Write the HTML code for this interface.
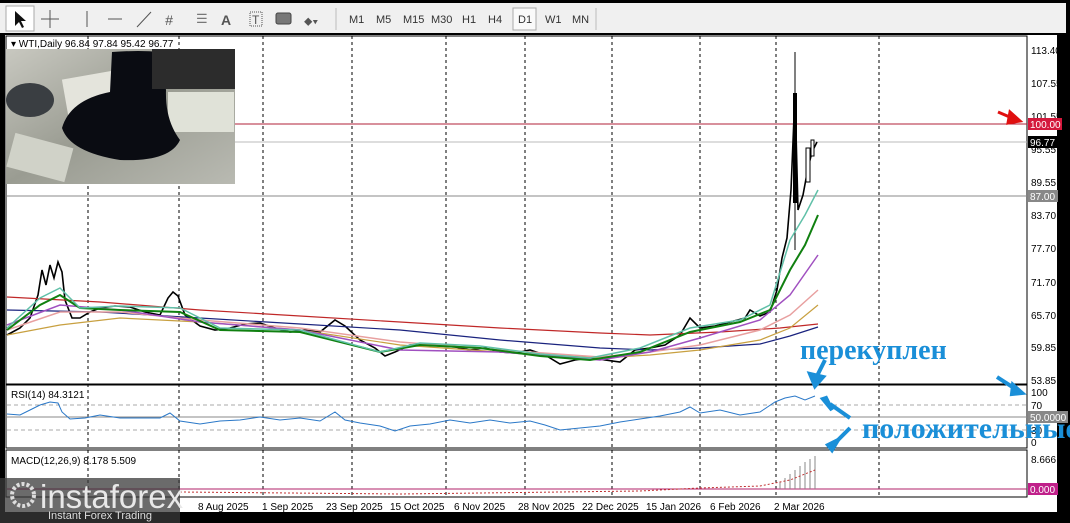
<!DOCTYPE html>
<html><head><meta charset="utf-8"><style>
body{margin:0;width:1070px;height:523px;overflow:hidden;background:#000;font-family:"Liberation Sans",sans-serif;}
svg{position:absolute;left:0;top:0}
.tb{font:11px "Liberation Sans",sans-serif;fill:#333}
.ax{font:10px "Liberation Sans",sans-serif;fill:#000}
</style></head><body>
<svg width="1070" height="523" viewBox="0 0 1070 523">
<rect x="0" y="3" width="1066" height="30" fill="#f0f0f0"/>
<rect x="6" y="6" width="28" height="25" fill="#fff" stroke="#aaa"/>
<path d="M15 11 L15 26 L19 22 L22 28 L24 27 L21 21 L26 21 Z" fill="#111"/>
<path d="M50 10 V28 M41 19 H59" stroke="#555"/>
<path d="M87 11 V27 M108 19 H122 M137 27 L151 12" stroke="#555"/>
<text x="165" y="25" font-size="14" fill="#555" font-style="italic">#</text>
<text x="196" y="23" font-size="13" fill="#777">☰</text>
<text x="221" y="25" font-size="14" font-weight="bold" fill="#555">A</text>
<rect x="250" y="12" width="12" height="14" fill="none" stroke="#555" stroke-dasharray="1,1"/><text x="252" y="24" font-size="12" fill="#555">T</text>
<rect x="276" y="13" width="15" height="11" rx="2" fill="#777" stroke="#444"/>
<text x="304" y="25" font-size="12" fill="#555">⬥▾</text>
<line x1="336" y1="8" x2="336" y2="30" stroke="#bbb"/>
<text x="349" y="23" class="tb">M1</text><text x="376" y="23" class="tb">M5</text><text x="403" y="23" class="tb">M15</text><text x="431" y="23" class="tb">M30</text><text x="462" y="23" class="tb">H1</text><text x="488" y="23" class="tb">H4</text>
<rect x="513" y="8" width="23" height="22" fill="#fafafa" stroke="#aaa"/>
<text x="518" y="23" class="tb">D1</text><text x="545" y="23" class="tb">W1</text><text x="572" y="23" class="tb">MN</text>
<line x1="596" y1="8" x2="596" y2="30" stroke="#bbb"/>
<rect x="5" y="35" width="1052" height="477" fill="#fff"/>
<rect x="6" y="36" width="1021" height="348" fill="none" stroke="#000"/>
<rect x="6" y="385" width="1021" height="63" fill="none" stroke="#000"/>
<rect x="6" y="450" width="1021" height="47" fill="none" stroke="#000"/>
<g stroke="#000" stroke-dasharray="3,3">
<line x1="88" y1="36" x2="88" y2="497"/><line x1="179" y1="36" x2="179" y2="497"/><line x1="263" y1="36" x2="263" y2="497"/><line x1="352" y1="36" x2="352" y2="497"/><line x1="446" y1="36" x2="446" y2="497"/><line x1="525" y1="36" x2="525" y2="497"/><line x1="612" y1="36" x2="612" y2="497"/><line x1="700" y1="36" x2="700" y2="497"/><line x1="776" y1="36" x2="776" y2="497"/><line x1="879" y1="36" x2="879" y2="497"/>
</g>
<line x1="7" y1="124" x2="1027" y2="124" stroke="#b0203a"/>
<line x1="7" y1="142" x2="1027" y2="142" stroke="#bbb"/>
<line x1="7" y1="196" x2="1027" y2="196" stroke="#888"/>
<defs><linearGradient id="g1" x1="0" y1="0" x2="1" y2="1"><stop offset="0" stop-color="#c8c8c0"/><stop offset=".5" stop-color="#9a9c92"/><stop offset="1" stop-color="#b9bab2"/></linearGradient></defs>
<rect x="6" y="49" width="229" height="135" fill="url(#g1)"/>
<rect x="65" y="75" width="60" height="40" fill="#e4e4dc" transform="rotate(-10 90 95)"/>
<rect x="168" y="92" width="66" height="40" fill="#e0e2d8"/>
<rect x="10" y="140" width="60" height="35" fill="#d0d2c8" transform="rotate(15 40 157)"/>
<ellipse cx="30" cy="100" rx="24" ry="17" fill="#3a3e42"/>
<path d="M112 52 Q140 50 160 52 L166 90 Q165 120 180 140 Q170 162 120 160 Q70 152 62 128 Q70 100 110 92 Z" fill="#0a0c12"/>
<rect x="152" y="49" width="83" height="40" fill="#2c2c2c"/>
<polyline fill="none" stroke="#000" stroke-width="1.6" points="7,335 20,328 30,318 38,295 42,270 46,285 50,265 54,278 58,262 62,272 65,300 72,318 80,318 90,312 100,308 115,306 130,307 145,312 160,315 168,298 173,292 178,296 185,315 200,326 215,330 230,328 245,324 260,323 275,328 290,332 305,330 320,332 335,320 345,326 360,340 375,348 385,356 395,352 410,345 425,345 440,346 455,347 470,350 485,348 500,352 515,353 530,350 545,355 560,364 575,360 590,358 605,360 620,362 635,350 650,348 665,345 680,335 690,318 700,328 715,326 730,322 745,318 750,310 760,316 770,312 777,290 782,258 787,238 791,190 795,93 798,210 803,195 808,168 812,152 817,142"/>
<rect x="793" y="93" width="4" height="110" fill="#000"/>
<line x1="795" y1="52" x2="795" y2="250" stroke="#000"/>
<rect x="806" y="148" width="4" height="34" fill="#fff" stroke="#000"/>
<rect x="811" y="140" width="3" height="16" fill="#fff" stroke="#000"/>
<polyline fill="none" stroke="#c02828" stroke-width="1.2" points="7,297 100,302 200,310 300,316 400,322 500,328 600,333 650,335 720,332 780,328 818,324"/>
<polyline fill="none" stroke="#1a237e" stroke-width="1.2" points="7,310 100,312 200,318 300,324 400,330 500,340 600,348 650,350 700,348 760,344 790,336 818,327"/>
<polyline fill="none" stroke="#c8a040" stroke-width="1.2" points="7,335 60,325 120,318 200,322 300,330 400,345 500,352 600,358 650,355 700,350 760,340 790,328 818,305"/>
<polyline fill="none" stroke="#e8a0a0" stroke-width="1.5" points="7,330 60,312 120,312 200,320 300,328 400,342 500,350 600,357 650,352 700,345 760,330 790,315 818,290"/>
<polyline fill="none" stroke="#a050c0" stroke-width="1.5" points="7,325 60,305 120,310 200,322 300,330 400,350 500,352 600,360 650,352 700,338 760,320 790,295 818,255"/>
<polyline fill="none" stroke="#108010" stroke-width="2" points="7,330 40,305 60,295 80,308 120,310 180,312 220,330 300,332 380,352 420,345 480,348 540,356 590,360 640,352 690,332 740,322 770,310 790,270 805,245 818,215"/>
<polyline fill="none" stroke="#60c0a8" stroke-width="1.5" points="7,328 40,298 60,288 80,308 120,306 180,308 220,328 300,330 380,352 420,343 480,346 540,354 590,358 640,348 690,328 740,320 770,305 790,240 805,215 818,190"/>
<line x1="7" y1="405" x2="1027" y2="405" stroke="#aaa" stroke-dasharray="4,3"/>
<line x1="7" y1="417" x2="1027" y2="417" stroke="#888"/>
<line x1="7" y1="430" x2="1027" y2="430" stroke="#aaa" stroke-dasharray="4,3"/>
<polyline fill="none" stroke="#2a78c8" points="7,414 20,415 30,410 40,405 50,402 58,403 62,412 70,419 85,418 100,415 120,418 140,418 160,418 170,413 180,421 200,424 220,421 240,420 260,417 280,420 300,418 320,421 335,412 345,420 360,423 380,426 395,431 410,426 430,424 450,420 470,423 490,420 510,423 530,421 545,425 560,430 580,428 600,426 620,422 640,419 660,416 680,412 690,407 700,413 720,410 740,415 760,412 775,402 785,398 795,396 805,400 815,396"/>
<line x1="7" y1="489" x2="1027" y2="489" stroke="#b0206a"/>
<g stroke="#888">
<line x1="780" y1="489" x2="780" y2="482"/><line x1="785" y1="489" x2="785" y2="478"/><line x1="790" y1="489" x2="790" y2="474"/><line x1="795" y1="489" x2="795" y2="470"/><line x1="800" y1="489" x2="800" y2="466"/><line x1="805" y1="489" x2="805" y2="462"/><line x1="810" y1="489" x2="810" y2="459"/><line x1="815" y1="489" x2="815" y2="456"/>
</g>
<polyline fill="none" stroke="#c03030" stroke-dasharray="2,2" points="180,492 400,494 640,491 700,488 760,486 790,480 815,470"/>
<text x="11" y="47" font-size="10" fill="#000">▾ WTI,Daily  96.84 97.84 95.42 96.77</text>
<text x="11" y="398" font-size="10" fill="#000">RSI(14) 84.3121</text>
<text x="11" y="464" font-size="10" fill="#000">MACD(12,26,9) 8.178 5.509</text>
<g class="ax">
<text x="1031" y="54">113.40</text><text x="1031" y="87">107.55</text><text x="1031" y="120">101.55</text><text x="1031" y="153">95.55</text><text x="1031" y="186">89.55</text><text x="1031" y="219">83.70</text><text x="1031" y="252">77.70</text><text x="1031" y="286">71.70</text><text x="1031" y="319">65.70</text><text x="1031" y="351">59.85</text><text x="1031" y="384">53.85</text>
<text x="1031" y="396">100</text><text x="1031" y="409">70</text><text x="1031" y="434">30</text><text x="1031" y="446">0</text>
<text x="1031" y="463">8.666</text>
</g>
<rect x="1028" y="118" width="34" height="12" fill="#d4183c"/><text x="1030" y="128" font-size="10" fill="#fff">100.00</text>
<rect x="1028" y="136" width="30" height="12" fill="#000"/><text x="1030" y="146" font-size="10" fill="#fff">96.77</text>
<rect x="1028" y="190" width="30" height="12" fill="#888"/><text x="1030" y="200" font-size="10" fill="#fff">87.00</text>
<rect x="1028" y="411" width="40" height="12" fill="#888"/><text x="1030" y="421" font-size="10" fill="#fff">50.0000</text>
<rect x="1028" y="483" width="30" height="12" fill="#c0208a"/><text x="1030" y="493" font-size="10" fill="#fff">0.000</text>
<g class="ax"><text x="198" y="510">8 Aug 2025</text><text x="262" y="510">1 Sep 2025</text><text x="326" y="510">23 Sep 2025</text><text x="390" y="510">15 Oct 2025</text><text x="454" y="510">6 Nov 2025</text><text x="518" y="510">28 Nov 2025</text><text x="582" y="510">22 Dec 2025</text><text x="646" y="510">15 Jan 2026</text><text x="710" y="510">6 Feb 2026</text><text x="774" y="510">2 Mar 2026</text></g>
<text x="800" y="359" font-family="Liberation Serif" font-weight="bold" font-size="28" fill="#1a8fd8">перекуплен</text>
<text x="862" y="438" font-family="Liberation Serif" font-weight="bold" font-size="30" fill="#1a8fd8">положительные</text>
<g stroke="#1a8fd8" stroke-width="4" fill="#1a8fd8">
<line x1="825" y1="360" x2="816" y2="378"/><path d="M810 374 L815 386 L823 377 Z"/>
<line x1="850" y1="418" x2="830" y2="404"/><path d="M826 398 L823 399 L832 410 Z"/>
<line x1="850" y1="428" x2="836" y2="442"/><path d="M828 445 L832 450 L838 440 Z"/>
<line x1="997" y1="377" x2="1017" y2="390"/><path d="M1022 393 L1013 385 L1012 394 Z"/>
</g>
<g stroke="#e01010" stroke-width="3" fill="#e01010"><line x1="998" y1="112" x2="1012" y2="118"/><path d="M1020 121 L1010 112 L1008 123 Z"/></g>
<rect x="0" y="478" width="180" height="45" fill="#3a3a3a" opacity="0.75"/>
<circle cx="23" cy="495" r="11" fill="none" stroke="#ddd" stroke-width="4" stroke-dasharray="3,2"/>
<text x="40" y="508" font-size="33" fill="#e8e8e8">instaforex</text>
<text x="48" y="519" font-size="11" fill="#ddd">Instant Forex Trading</text>
</svg>
</body></html>
